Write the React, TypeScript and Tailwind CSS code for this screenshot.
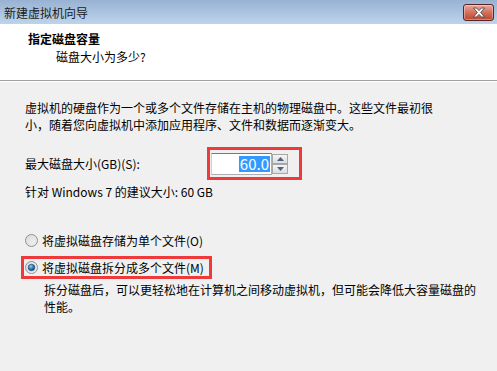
import React from 'react';

const font = { fontFamily: '"Noto Sans CJK SC", "Noto Sans", sans-serif' };

const CloseButton = () => (
  <div className="w-[31px] h-[17px] rounded-[3px] border border-[#5a2424] bg-gradient-to-b from-[#e9a99b] via-[#d2705c] to-[#c0432c] flex items-center justify-center shadow-[inset_0_0_0_1px_rgba(255,255,255,0.35)]">
    <svg width="14" height="11" viewBox="0 0 14 11">
      <path
        d="M1.5 1 L4.5 1 L7 3.6 L9.5 1 L12.5 1 L8.6 5.5 L12.5 10 L9.5 10 L7 7.4 L4.5 10 L1.5 10 L5.4 5.5 Z"
        fill="#ffffff"
        stroke="#4a4a4a"
        strokeWidth="0.9"
        strokeLinejoin="round"
      />
    </svg>
  </div>
);

const Radio = ({ checked }: { checked?: boolean }) => (
  <svg width="13" height="13" viewBox="0 0 13 13" className="shrink-0">
    <defs>
      <linearGradient id="rb" x1="0" y1="0" x2="1" y2="1">
        <stop offset="0" stopColor="#d8d8d8" />
        <stop offset="1" stopColor="#f8f8f8" />
      </linearGradient>
      <radialGradient id="dot" cx="0.4" cy="0.35" r="0.7">
        <stop offset="0" stopColor="#8fd3fb" />
        <stop offset="0.5" stopColor="#2a7fc0" />
        <stop offset="1" stopColor="#113d6a" />
      </radialGradient>
    </defs>
    <circle cx="6.5" cy="6.5" r="6" fill="url(#rb)" stroke="#8f8f8f" strokeWidth="1" />
    <circle cx="6.5" cy="6.5" r="4.5" fill="none" stroke="#e2e2e2" strokeWidth="1" />
    {checked && <circle cx="6.5" cy="6.5" r="3.3" fill="url(#dot)" stroke="#1d4d78" strokeWidth="0.6" />}
  </svg>
);

const SpinBtn = ({ up }: { up?: boolean }) => (
  <div className="w-[16px] h-[10px] border border-[#a7a7a7] bg-gradient-to-b from-[#f5f5f5] to-[#dcdcdc] flex items-center justify-center">
    <svg width="7" height="4" viewBox="0 0 7 4">
      {up ? <path d="M0 4 L3.5 0 L7 4 Z" fill="#4d6185" /> : <path d="M0 0 L3.5 4 L7 0 Z" fill="#4d6185" />}
    </svg>
  </div>
);

export default function App() {
  return (
    <div className="w-[497px] h-[371px] bg-[#f0f0f0] flex flex-col text-[12px] text-black overflow-hidden" style={font}>
      <div className="h-[24px] shrink-0 bg-gradient-to-b from-[#98b2d3] to-[#bed4ec] flex items-center justify-between pl-[4px] pr-[3px]">
        <span className="text-[#1a1a1a] leading-[17px]">新建虚拟机向导</span>
        <CloseButton />
      </div>

      <div className="h-[56px] shrink-0 bg-white pl-[28px] pt-[6px]">
        <div className="font-bold leading-[17px]">指定磁盘容量</div>
        <div className="leading-[17px] mt-[1px] pl-[28px]">磁盘大小为多少?</div>
      </div>
      <div className="h-px bg-[#a0a0a0]" />
      <div className="h-px bg-white" />

      <div className="flex flex-col px-[25px]">
        <p className="mt-[17px] leading-[17px] whitespace-nowrap">
          虚拟机的硬盘作为一个或多个文件存储在主机的物理磁盘中。这些文件最初很
          <br />
          小，随着您向虚拟机中添加应用程序、文件和数据而逐渐变大。
        </p>

        <div className="mt-[14px] flex items-center h-[33px]">
          <span className="w-[182px] leading-[17px]">最大磁盘大小(GB)(S):</span>
          <div className="border-[3px] border-[#ee3a3a] pt-[3px] pb-[2px] pl-[1px] pr-[11px] flex items-start">
            <div className="w-[61px] h-[22px] bg-white border border-[#abadb3] border-t-[#5a7fae] border-l-[#c3d3e6] flex items-center justify-end pr-[1px]">
              <span className="bg-[#3399ff] text-white text-[15px] leading-[16px] px-[1px]">60.0</span>
            </div>
            <div className="flex flex-col mt-[1px]">
              <SpinBtn up />
              <SpinBtn />
            </div>
          </div>
        </div>

        <div className="mt-[3px] leading-[17px]">针对 Windows 7 的建议大小: 60 GB</div>

        <div className="mt-[30px] h-[20px] flex items-center gap-[4px]">
          <Radio />
          <span className="leading-[17px]">将虚拟磁盘存储为单个文件(O)</span>
        </div>

        <div className="mt-[6px] -ml-[4px] self-start h-[23px] border-[3px] border-[#ee3a3a] pl-[1px] pr-[5px] flex items-center gap-[4px]">
          <Radio checked />
          <span className="leading-[17px]">将虚拟磁盘拆分成多个文件(M)</span>
        </div>

        <p className="mt-[2px] ml-[19px] leading-[17px] whitespace-nowrap">
          拆分磁盘后，可以更轻松地在计算机之间移动虚拟机，但可能会降低大容量磁盘的
          <br />
          性能。
        </p>
      </div>
    </div>
  );
}
